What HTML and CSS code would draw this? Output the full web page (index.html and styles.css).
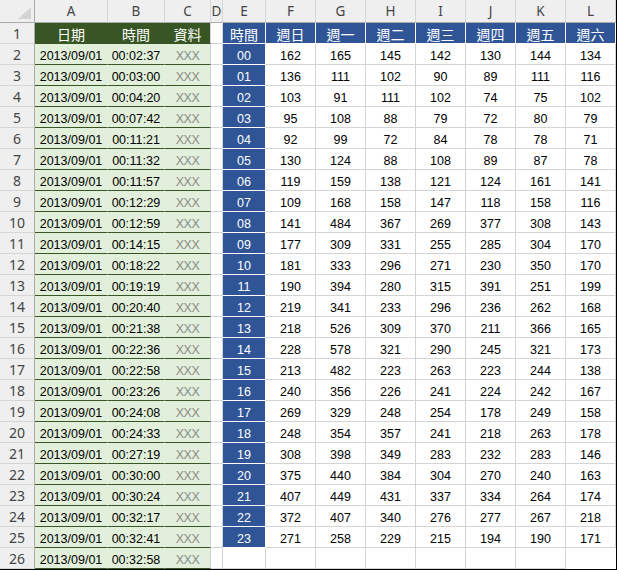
FILE: index.html
```html
<!DOCTYPE html>
<html lang="zh-Hant">
<head>
<meta charset="utf-8">
<title>Sheet</title>
<link rel="stylesheet" href="styles.css">
</head>
<body>
<div class="sheet">
<div class="corner"><svg width="34" height="22" viewBox="0 0 34 22"><polygon points="31,7 31,19 18,19" fill="#d4d4d4"/></svg></div>
<div class="ch">A</div><div class="ch">B</div><div class="ch">C</div><div class="ch">D</div><div class="ch">E</div><div class="ch">F</div><div class="ch">G</div><div class="ch">H</div><div class="ch">I</div><div class="ch">J</div><div class="ch">K</div><div class="ch">L</div>

<div class="rh">1</div><div class="gh">日期</div><div class="gh">時間</div><div class="gh gc">資料</div><div class="d"></div><div class="bh">時間</div><div class="bh">週日</div><div class="bh">週一</div><div class="bh">週二</div><div class="bh">週三</div><div class="bh">週四</div><div class="bh">週五</div><div class="bh">週六</div>

<div class="rh">2</div><div class="g">2013/09/01</div><div class="g">00:02:37</div><div class="g gc gx">XXX</div><div class="d"></div><div class="bl">00</div><div class="n">162</div><div class="n">165</div><div class="n">145</div><div class="n">142</div><div class="n">130</div><div class="n">144</div><div class="n">134</div>
<div class="rh">3</div><div class="g">2013/09/01</div><div class="g">00:03:00</div><div class="g gc gx">XXX</div><div class="d"></div><div class="bl">01</div><div class="n">136</div><div class="n">111</div><div class="n">102</div><div class="n">90</div><div class="n">89</div><div class="n">111</div><div class="n">116</div>
<div class="rh">4</div><div class="g">2013/09/01</div><div class="g">00:04:20</div><div class="g gc gx">XXX</div><div class="d"></div><div class="bl">02</div><div class="n">103</div><div class="n">91</div><div class="n">111</div><div class="n">102</div><div class="n">74</div><div class="n">75</div><div class="n">102</div>
<div class="rh">5</div><div class="g">2013/09/01</div><div class="g">00:07:42</div><div class="g gc gx">XXX</div><div class="d"></div><div class="bl">03</div><div class="n">95</div><div class="n">108</div><div class="n">88</div><div class="n">79</div><div class="n">72</div><div class="n">80</div><div class="n">79</div>
<div class="rh">6</div><div class="g">2013/09/01</div><div class="g">00:11:21</div><div class="g gc gx">XXX</div><div class="d"></div><div class="bl">04</div><div class="n">92</div><div class="n">99</div><div class="n">72</div><div class="n">84</div><div class="n">78</div><div class="n">78</div><div class="n">71</div>
<div class="rh">7</div><div class="g">2013/09/01</div><div class="g">00:11:32</div><div class="g gc gx">XXX</div><div class="d"></div><div class="bl">05</div><div class="n">130</div><div class="n">124</div><div class="n">88</div><div class="n">108</div><div class="n">89</div><div class="n">87</div><div class="n">78</div>
<div class="rh">8</div><div class="g">2013/09/01</div><div class="g">00:11:57</div><div class="g gc gx">XXX</div><div class="d"></div><div class="bl">06</div><div class="n">119</div><div class="n">159</div><div class="n">138</div><div class="n">121</div><div class="n">124</div><div class="n">161</div><div class="n">141</div>
<div class="rh">9</div><div class="g">2013/09/01</div><div class="g">00:12:29</div><div class="g gc gx">XXX</div><div class="d"></div><div class="bl">07</div><div class="n">109</div><div class="n">168</div><div class="n">158</div><div class="n">147</div><div class="n">118</div><div class="n">158</div><div class="n">116</div>
<div class="rh">10</div><div class="g">2013/09/01</div><div class="g">00:12:59</div><div class="g gc gx">XXX</div><div class="d"></div><div class="bl">08</div><div class="n">141</div><div class="n">484</div><div class="n">367</div><div class="n">269</div><div class="n">377</div><div class="n">308</div><div class="n">143</div>
<div class="rh">11</div><div class="g">2013/09/01</div><div class="g">00:14:15</div><div class="g gc gx">XXX</div><div class="d"></div><div class="bl">09</div><div class="n">177</div><div class="n">309</div><div class="n">331</div><div class="n">255</div><div class="n">285</div><div class="n">304</div><div class="n">170</div>
<div class="rh">12</div><div class="g">2013/09/01</div><div class="g">00:18:22</div><div class="g gc gx">XXX</div><div class="d"></div><div class="bl">10</div><div class="n">181</div><div class="n">333</div><div class="n">296</div><div class="n">271</div><div class="n">230</div><div class="n">350</div><div class="n">170</div>
<div class="rh">13</div><div class="g">2013/09/01</div><div class="g">00:19:19</div><div class="g gc gx">XXX</div><div class="d"></div><div class="bl">11</div><div class="n">190</div><div class="n">394</div><div class="n">280</div><div class="n">315</div><div class="n">391</div><div class="n">251</div><div class="n">199</div>
<div class="rh">14</div><div class="g">2013/09/01</div><div class="g">00:20:40</div><div class="g gc gx">XXX</div><div class="d"></div><div class="bl">12</div><div class="n">219</div><div class="n">341</div><div class="n">233</div><div class="n">296</div><div class="n">236</div><div class="n">262</div><div class="n">168</div>
<div class="rh">15</div><div class="g">2013/09/01</div><div class="g">00:21:38</div><div class="g gc gx">XXX</div><div class="d"></div><div class="bl">13</div><div class="n">218</div><div class="n">526</div><div class="n">309</div><div class="n">370</div><div class="n">211</div><div class="n">366</div><div class="n">165</div>
<div class="rh">16</div><div class="g">2013/09/01</div><div class="g">00:22:36</div><div class="g gc gx">XXX</div><div class="d"></div><div class="bl">14</div><div class="n">228</div><div class="n">578</div><div class="n">321</div><div class="n">290</div><div class="n">245</div><div class="n">321</div><div class="n">173</div>
<div class="rh">17</div><div class="g">2013/09/01</div><div class="g">00:22:58</div><div class="g gc gx">XXX</div><div class="d"></div><div class="bl">15</div><div class="n">213</div><div class="n">482</div><div class="n">223</div><div class="n">263</div><div class="n">223</div><div class="n">244</div><div class="n">138</div>
<div class="rh">18</div><div class="g">2013/09/01</div><div class="g">00:23:26</div><div class="g gc gx">XXX</div><div class="d"></div><div class="bl">16</div><div class="n">240</div><div class="n">356</div><div class="n">226</div><div class="n">241</div><div class="n">224</div><div class="n">242</div><div class="n">167</div>
<div class="rh">19</div><div class="g">2013/09/01</div><div class="g">00:24:08</div><div class="g gc gx">XXX</div><div class="d"></div><div class="bl">17</div><div class="n">269</div><div class="n">329</div><div class="n">248</div><div class="n">254</div><div class="n">178</div><div class="n">249</div><div class="n">158</div>
<div class="rh">20</div><div class="g">2013/09/01</div><div class="g">00:24:33</div><div class="g gc gx">XXX</div><div class="d"></div><div class="bl">18</div><div class="n">248</div><div class="n">354</div><div class="n">357</div><div class="n">241</div><div class="n">218</div><div class="n">263</div><div class="n">178</div>
<div class="rh">21</div><div class="g">2013/09/01</div><div class="g">00:27:19</div><div class="g gc gx">XXX</div><div class="d"></div><div class="bl">19</div><div class="n">308</div><div class="n">398</div><div class="n">349</div><div class="n">283</div><div class="n">232</div><div class="n">283</div><div class="n">146</div>
<div class="rh">22</div><div class="g">2013/09/01</div><div class="g">00:30:00</div><div class="g gc gx">XXX</div><div class="d"></div><div class="bl">20</div><div class="n">375</div><div class="n">440</div><div class="n">384</div><div class="n">304</div><div class="n">270</div><div class="n">240</div><div class="n">163</div>
<div class="rh">23</div><div class="g">2013/09/01</div><div class="g">00:30:24</div><div class="g gc gx">XXX</div><div class="d"></div><div class="bl">21</div><div class="n">407</div><div class="n">449</div><div class="n">431</div><div class="n">337</div><div class="n">334</div><div class="n">264</div><div class="n">174</div>
<div class="rh">24</div><div class="g">2013/09/01</div><div class="g">00:32:17</div><div class="g gc gx">XXX</div><div class="d"></div><div class="bl">22</div><div class="n">372</div><div class="n">407</div><div class="n">340</div><div class="n">276</div><div class="n">277</div><div class="n">267</div><div class="n">218</div>
<div class="rh">25</div><div class="g">2013/09/01</div><div class="g">00:32:41</div><div class="g gc gx">XXX</div><div class="d"></div><div class="bl">23</div><div class="n">271</div><div class="n">258</div><div class="n">229</div><div class="n">215</div><div class="n">194</div><div class="n">190</div><div class="n">171</div>
<div class="rh">26</div><div class="g">2013/09/01</div><div class="g">00:32:58</div><div class="g gc gx">XXX</div><div class="d"></div><div class="d"></div><div class="d"></div><div class="d"></div><div class="d"></div><div class="d"></div><div class="d"></div><div class="d"></div>
</div>
</body>
</html>
```
FILE: styles.css
```css
* { box-sizing: border-box; }
html, body { margin: 0; padding: 0; background: #ffffff; }
.sheet {
  display: grid;
  grid-template-columns: 35px 73px 57px 46px 12px 43px repeat(7, 50px);
  grid-template-rows: 23px repeat(26, 21px);
  width: 617px;
  height: 570px;
  border-right: 1px solid #000;
  border-bottom: 1px solid #000;
  font-family: "Liberation Sans", Arial, sans-serif;
  font-size: 12.5px;
  color: #000;
  overflow: hidden;
}
.sheet > div {
  display: flex;
  align-items: flex-end;
  justify-content: center;
  line-height: 14px;
  padding-bottom: 1px;
  border-right: 1px solid #d4d4d4;
  border-bottom: 1px solid #d4d4d4;
  white-space: nowrap;
  overflow: hidden;
}
.sheet > .corner {
  background: #efefef;
  border-right: 1px solid #ababab;
  border-bottom: 1px solid #ababab;
  padding: 0;
  align-items: flex-start;
  justify-content: flex-start;
}
.sheet > .ch {
  background: #efefef;
  border-right: 1px solid #d5d5d5;
  border-bottom: 1px solid #ababab;
  align-items: center;
  padding: 0 0 1px;
  font-family: "Noto Sans", "Open Sans", sans-serif;
  font-size: 13.5px;
  color: #444;
}
.sheet > .rh {
  background: #efefef;
  border-right: 1px solid #ababab;
  border-bottom: 1px solid #d5d5d5;
  font-family: "Noto Sans", "Open Sans", sans-serif;
  font-size: 14px;
  color: #444;
  padding-bottom: 2px;
}
.sheet > .gh {
  background: #375623;
  border-right-color: #375623;
  border-bottom-color: #375623;
  color: #fff;
  font-family: "Noto Sans CJK TC", sans-serif;
  font-size: 14px;
  padding-bottom: 2px;
}
.sheet > .g {
  background: #e2efda;
  border-right-color: #e2efda;
  border-bottom-color: #375623;
}
.sheet > .gc { border-right-color: #d4d4d4; }
.gx { color: #8c8c8c; letter-spacing: -0.5px; }
.sheet > .bh {
  background: #2f5597;
  border-right-color: #fff;
  border-bottom-color: #fff;
  color: #fff;
  font-family: "Noto Sans CJK TC", sans-serif;
  font-size: 14px;
  padding-bottom: 2px;
}
.sheet > .bl {
  background: #2f5597;
  border-right-color: #fff;
  border-bottom-color: #fff;
  color: #fff;
}
.sheet > .n { background: #fff; }
.sheet > .d { background: #fff; }
```
